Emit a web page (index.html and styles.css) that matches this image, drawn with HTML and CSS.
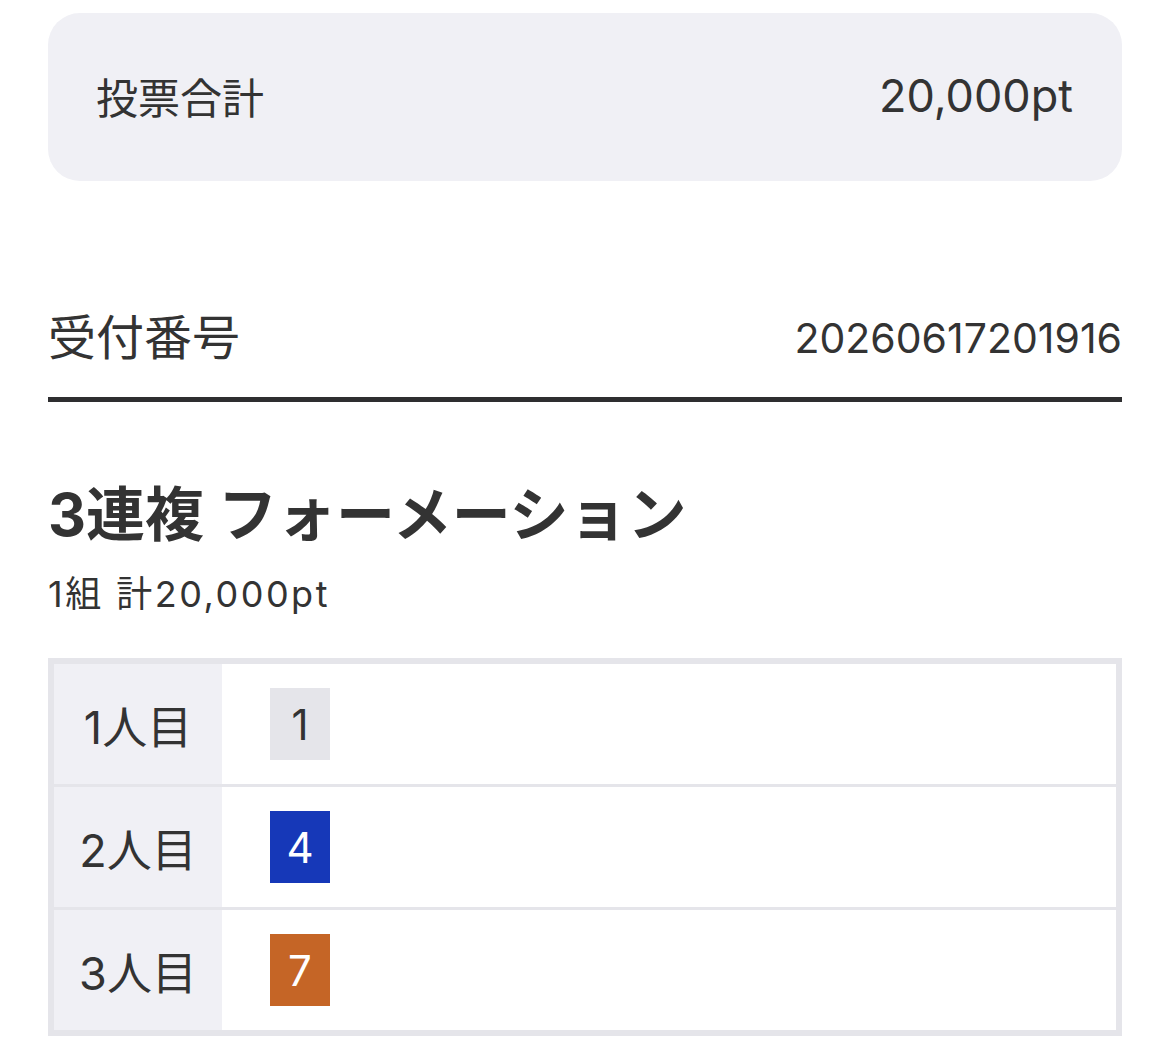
FILE: index.html
```html
<!DOCTYPE html>
<html lang="ja">
<head>
    <meta charset="UTF-8">
    <meta name="viewport" content="width=device-width, initial-scale=1.0">
    <title>投票内容</title>
    <link rel="stylesheet" href="styles.css">
</head>
<body>

<div class="page">
    <!-- Total -->
    <div class="total-box">
        <span class="total-label">投票合計</span>
        <span class="total-value">20,000pt</span>
    </div>

    <!-- Receipt number -->
    <div class="receipt-row">
        <span class="receipt-label">受付番号</span>
        <span class="receipt-value">20260617201916</span>
    </div>

    <!-- Bet -->
    <h2 class="bet-title">3連複 フォーメーション</h2>
    <p class="bet-sub">1組 計20,000pt</p>

    <div class="bet-table">
        <div class="bet-row">
            <div class="bet-label">1人目</div>
            <div class="bet-cell"><span class="num num-1">1</span></div>
        </div>
        <div class="bet-row">
            <div class="bet-label">2人目</div>
            <div class="bet-cell"><span class="num num-4">4</span></div>
        </div>
        <div class="bet-row">
            <div class="bet-label">3人目</div>
            <div class="bet-cell"><span class="num num-7">7</span></div>
        </div>
    </div>
</div>

</body>
</html>
```

FILE: styles.css
```css
body {
    margin: 0;
    padding: 0;
    background-color: #ffffff;
    color: #333333;
    font-family: "Inter", "Noto Sans CJK JP", sans-serif;
}

.page {
    padding: 13px 48px 0 48px;
}

.total-box {
    display: flex;
    justify-content: space-between;
    align-items: center;
    height: 168px;
    padding: 0 49px 4px 48px;
    box-sizing: border-box;
    background-color: #f0f0f5;
    border-radius: 32px;
    font-size: 42px;
}

.total-value {
    font-size: 45px;
}

.receipt-row {
    display: flex;
    justify-content: space-between;
    align-items: center;
    margin-top: 124px;
    padding-bottom: 26px;
    border-bottom: 5px solid #2e2e30;
    line-height: 66px;
}

.receipt-label {
    font-size: 48px;
}

.receipt-value {
    font-size: 41px;
}

.bet-title {
    margin: 76px 0 0 0;
    font-size: 59px;
    font-weight: bold;
    line-height: 73px;
}

.bet-sub {
    margin: 20px 0 0 0;
    font-size: 36px;
    line-height: 47px;
    letter-spacing: 2.5px;
}

/* Formation table */
.bet-table {
    margin-top: 40px;
    border: 6px solid #e5e5ea;
}

.bet-row {
    display: flex;
    height: 120px;
}

.bet-row + .bet-row {
    border-top: 3px solid #e5e5ea;
}

.bet-label {
    width: 168px;
    display: flex;
    justify-content: center;
    align-items: center;
    background-color: #f0f0f5;
    font-size: 45px;
}

.bet-cell {
    flex: 1;
    display: flex;
    align-items: center;
    padding-left: 48px;
}

.num {
    width: 60px;
    height: 72px;
    display: flex;
    justify-content: center;
    align-items: center;
    font-size: 42px;
}

.num-1 {
    background-color: #e5e5ea;
    color: #333333;
}

.num-4 {
    background-color: #1638b8;
    color: #ffffff;
}

.num-7 {
    background-color: #c56526;
    color: #ffffff;
}
```
